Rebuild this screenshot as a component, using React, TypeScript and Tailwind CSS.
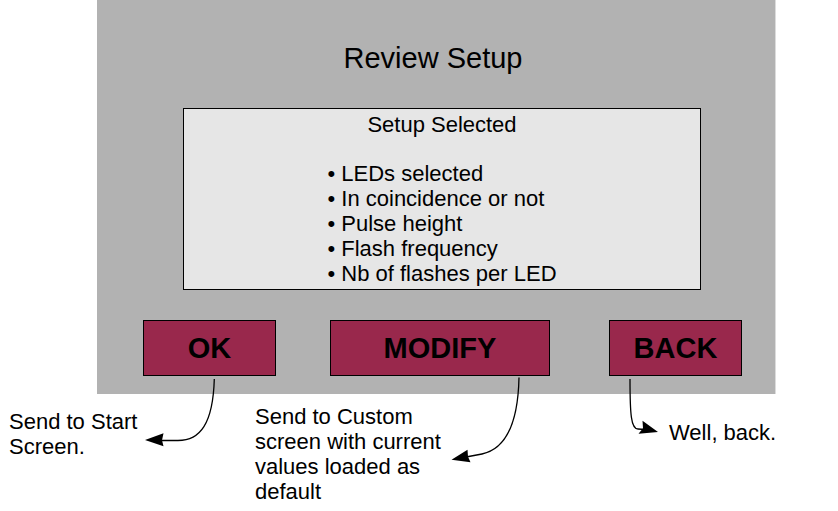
type Action = {
  id: string;
  label: string;
  column: string;
  curve: string;
  head: string;
  note: string;
  noteClass: string;
};

const settings = [
  "LEDs selected",
  "In coincidence or not",
  "Pulse height",
  "Flash frequency",
  "Nb of flashes per LED",
];

const actions: Action[] = [
  {
    id: "ok",
    label: "OK",
    column: "col-start-1",
    curve: "M71.3 3C70 48 57 64.5 35 64.5H17",
    head: "2,64 20.5,57.3 19,64.2 20.5,70.3",
    note: "Send to Start Screen.",
    noteClass: "max-w-36 pt-[5px]",
  },
  {
    id: "modify",
    label: "MODIFY",
    column: "col-start-3",
    curve: "M189 1.5C188 48 176 73 152 78L136 81",
    head: "121.5,83.7 137.5,73.7 138,80.7 140.5,86.3",
    note: "Send to Custom screen with current values loaded as default",
    noteClass: "max-w-48",
  },
  {
    id: "back",
    label: "BACK",
    column: "col-start-5",
    curve: "M21 3C21 38 22 53 29 53L36 53.5",
    head: "49,56 33.5,44.7 34,52.3 29.5,57.8",
    note: "Well, back.",
    noteClass: "pt-4",
  },
];

function ActionButton({ action }: { action: Action }) {
  return (
    <div className={`relative ${action.column}`}>
      <button
        type="button"
        aria-describedby={`${action.id}-note`}
        className="h-14 w-full border border-black bg-[#99284c] text-[29px] leading-[33px] font-bold"
      >
        {action.label}
      </button>
      <svg
        aria-hidden="true"
        width="220"
        height="90"
        viewBox="0 0 220 90"
        className="pointer-events-none absolute top-full left-0 max-w-none"
      >
        <path d={action.curve} fill="none" stroke="#000" strokeWidth="1.3" />
        <polygon points={action.head} />
      </svg>
    </div>
  );
}

export default function App() {
  return (
    <div className="bg-white font-['Liberation_Sans',Arial,sans-serif] text-[22px] leading-[25px] text-black">
      <main className="mr-[62px] ml-[97px] border-r border-[#dcdcdc] bg-[#b2b2b2] pt-[42px] pb-[18px]">
        <h1 className="pr-1.5 text-center text-[29px] leading-[33px]">Review Setup</h1>

        <section className="mt-[33px] mr-[74px] ml-[86px] border border-black bg-[#e6e6e6] py-[3px]">
          <h2 className="text-center">Setup Selected</h2>
          <ul className="mx-auto mt-6 w-fit">
            {settings.map((item) => (
              <li key={item}>• {item}</li>
            ))}
          </ul>
        </section>

        <div className="mt-[30px] mr-[33px] ml-[46px] grid grid-cols-[133fr_54fr_220fr_59fr_133fr]">
          {actions.map((action) => (
            <ActionButton key={action.id} action={action} />
          ))}
        </div>
      </main>

      <div className="grid grid-cols-[246fr_414fr_169fr] pt-2.5 pl-[9px]">
        {actions.map((action) => (
          <p key={action.id} id={`${action.id}-note`} className={action.noteClass}>
            {action.note}
          </p>
        ))}
      </div>
    </div>
  );
}
